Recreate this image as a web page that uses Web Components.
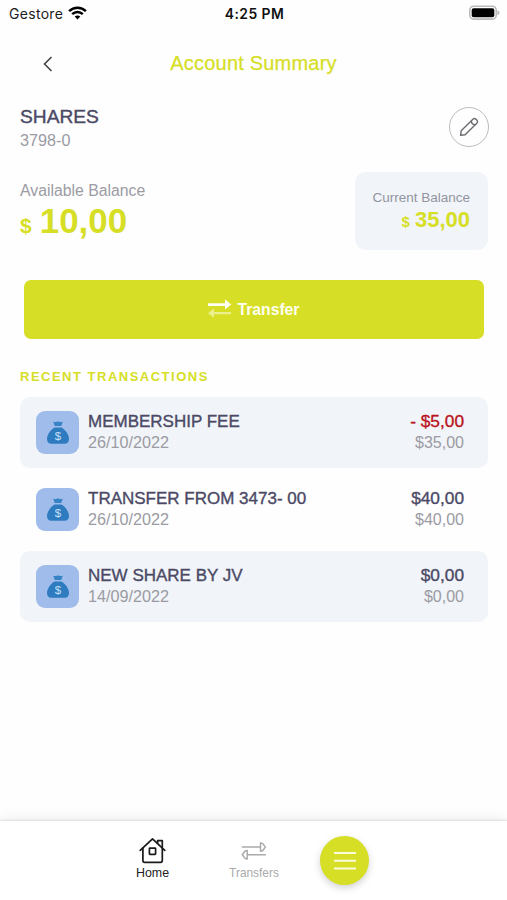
<!DOCTYPE html>
<html lang="en">
<head>
<meta charset="utf-8">
<title>Account Summary</title>
<style>
    :root {
        --lime: #d6de26;
        --ink: #4b4965;
        --muted: #9b9ba3;
        --panel: #f1f4f8;
    }
    body {
        margin: 0;
        background: #fefefe;
        font-family: "Liberation Sans", Arial, sans-serif;
        color: var(--ink);
    }
</style>
</head>
<body>
<account-app>
    <status-bar slot="top" carrier="Gestore" time="4:25 PM"></status-bar>
    <page-header slot="top">Account Summary</page-header>
    <account-info>
        <span slot="name">SHARES</span>
        <span slot="number">3798-0</span>
    </account-info>
    <balance-summary>
        <span slot="available">10,00</span>
        <span slot="current">35,00</span>
    </balance-summary>
    <transfer-button>Transfer</transfer-button>
    <transaction-list>
        <span slot="heading">RECENT TRANSACTIONS</span>
        <transaction-row shaded negative>
            <span slot="title">MEMBERSHIP FEE</span>
            <span slot="date">26/10/2022</span>
            <span slot="amount">- $5,00</span>
            <span slot="balance">$35,00</span>
        </transaction-row>
        <transaction-row>
            <span slot="title">TRANSFER FROM 3473- 00</span>
            <span slot="date">26/10/2022</span>
            <span slot="amount">$40,00</span>
            <span slot="balance">$40,00</span>
        </transaction-row>
        <transaction-row shaded>
            <span slot="title">NEW SHARE BY JV</span>
            <span slot="date">14/09/2022</span>
            <span slot="amount">$0,00</span>
            <span slot="balance">$0,00</span>
        </transaction-row>
    </transaction-list>
    <bottom-nav slot="bottom"></bottom-nav>
</account-app>

<script>
function attach(el, html) {
    const shadow = el.attachShadow({ mode: 'open' });
    const template = document.createElement('template');
    template.innerHTML = html;
    shadow.appendChild(template.content.cloneNode(true));
    return shadow;
}

class AccountApp extends HTMLElement {
    constructor() {
        super();
        attach(this, `
            <style>
                :host {
                    display: flex;
                    flex-direction: column;
                    height: 900px;
                    overflow: hidden;
                }
                main {
                    flex: 1;
                    padding: 5px 19px 0 20px;
                }
            </style>
            <slot name="top"></slot>
            <main><slot></slot></main>
            <slot name="bottom"></slot>
        `);
    }
}

class StatusBar extends HTMLElement {
    constructor() {
        super();
        const shadow = attach(this, `
            <style>
                :host {
                    display: grid;
                    grid-template-columns: 1fr auto 1fr;
                    align-items: center;
                    height: 28px;
                    box-sizing: border-box;
                    padding: 0 7px 0 9px;
                    font: 14px/28px Inter, sans-serif;
                    color: #1c1c1c;
                }
                .left { display: flex; align-items: center; gap: 5px; }
                .carrier { letter-spacing: 0.3px; }
                .time { font-weight: 600; font-size: 13.9px; letter-spacing: 0.45px; color: #111; }
                .battery { justify-self: end; }
                svg { display: block; margin-top: -2px; }
            </style>
            <div class="left">
                <span class="carrier"></span>
                <svg width="19" height="14" viewBox="0 0 19 14" fill="none" stroke="#000" stroke-width="2.5">
                    <path d="M1.1 5.1C5.8.5 13.2.5 17.9 5.1"/>
                    <path d="M4.2 8.2C7.2 5.3 11.8 5.3 14.8 8.2"/>
                    <path d="M6.7 10.6C8.3 9.2 10.7 9.2 12.3 10.6L9.5 13.5Z" fill="#000" stroke="none"/>
                </svg>
            </div>
            <span class="time"></span>
            <svg class="battery" width="31" height="16" viewBox="0 0 31 16">
                <rect x=".8" y="1.3" width="26.4" height="12.8" rx="3.8" fill="#fff" stroke="#bbb" stroke-width="1.6"/>
                <rect x="2.7" y="3.2" width="22.6" height="9" rx="2" fill="#000"/>
                <path d="M28.4 5.2Q30.6 6 30.6 7.7T28.4 10.2Z" fill="#bbb"/>
            </svg>
        `);
        shadow.querySelector('.carrier').textContent = this.getAttribute('carrier');
        shadow.querySelector('.time').textContent = this.getAttribute('time');
    }
}

class PageHeader extends HTMLElement {
    constructor() {
        super();
        attach(this, `
            <style>
                :host {
                    display: grid;
                    grid-template-columns: 54px 1fr 54px;
                    align-items: center;
                    height: 70px;
                }
                svg { justify-self: end; margin-top: 2px; }
                h1 {
                    margin: 0;
                    text-align: center;
                    font-size: 20px;
                    font-weight: 400;
                    letter-spacing: 0.2px;
                    color: var(--lime);
                    -webkit-text-stroke: 0.25px var(--lime);
                }
            </style>
            <svg width="13" height="18" viewBox="0 0 13 18" fill="none" stroke="#444" stroke-width="1.6">
                <path d="M10.5 2L3.5 9L10.5 16"/>
            </svg>
            <h1><slot></slot></h1>
        `);
    }
}

class AccountInfo extends HTMLElement {
    constructor() {
        super();
        attach(this, `
            <style>
                :host {
                    display: flex;
                    justify-content: space-between;
                    align-items: center;
                    height: 48px;
                }
                .name {
                    font-size: 19.2px;
                    line-height: 26px;
                    -webkit-text-stroke: 0.4px var(--ink);
                }
                .number { font-size: 16.2px; line-height: 21px; color: var(--muted); }
                .edit {
                    display: grid;
                    place-items: center;
                    width: 40px;
                    height: 40px;
                    margin-right: -1px;
                    box-sizing: border-box;
                    border: 1.5px solid #bcbcbe;
                    border-radius: 50%;
                    background: none;
                    padding: 0;
                }
            </style>
            <div>
                <div class="name"><slot name="name"></slot></div>
                <div class="number"><slot name="number"></slot></div>
            </div>
            <button class="edit" aria-label="Edit">
                <svg width="20" height="20" viewBox="0 0 20 20" fill="none" stroke="#6b6b70" stroke-width="1.4" stroke-linejoin="round">
                    <path d="M1.6 18.3L2.2 13.8L13.9 2.2Q15.4 .9 17 2.3L17.8 3.1Q19.2 4.7 17.8 6.2L6.1 17.7Z"/>
                    <path d="M12.4 3.8C12.4 6.4 13.7 7.7 16.2 7.7"/>
                </svg>
            </button>
        `);
    }
}

class BalanceSummary extends HTMLElement {
    constructor() {
        super();
        attach(this, `
            <style>
                :host {
                    display: flex;
                    justify-content: space-between;
                    align-items: flex-start;
                    margin-top: 21px;
                    height: 78px;
                }
                .label { color: var(--muted); }
                .value { font-weight: 700; color: var(--lime); white-space: nowrap; }
                .available { padding-top: 9px; }
                .available .label { font-size: 15.8px; line-height: 20px; }
                .available .value {
                    display: flex;
                    align-items: baseline;
                    gap: 8px;
                    font-size: 35px;
                    line-height: 40px;
                }
                .available small { font-size: 21px; }
                .current {
                    width: 133px;
                    height: 78px;
                    box-sizing: border-box;
                    padding: 16px 18px 0 0;
                    border-radius: 11px;
                    background: var(--panel);
                    text-align: right;
                }
                .current .label { font-size: 13.5px; line-height: 20px; color: #9294a2; }
                .current .value {
                    display: flex;
                    justify-content: flex-end;
                    align-items: baseline;
                    gap: 5px;
                    font-size: 22px;
                    line-height: 24px;
                }
                .current small { font-size: 15px; }
            </style>
            <div class="available">
                <div class="label">Available Balance</div>
                <div class="value"><small>$</small><slot name="available"></slot></div>
            </div>
            <div class="current">
                <div class="label">Current Balance</div>
                <div class="value"><small>$</small><slot name="current"></slot></div>
            </div>
        `);
    }
}

class TransferButton extends HTMLElement {
    constructor() {
        super();
        attach(this, `
            <style>
                :host { display: block; margin: 30px 4px 0; }
                button {
                    display: flex;
                    align-items: center;
                    justify-content: center;
                    gap: 6px;
                    width: 100%;
                    height: 59px;
                    padding: 0 2px 0 0;
                    border: 0;
                    border-radius: 7px;
                    background: var(--lime);
                    color: #fffff0;
                    font: 700 15.7px/20px "Liberation Sans", Arial, sans-serif;
                }
                svg { margin-top: -2px; }
            </style>
            <button>
                <svg width="25" height="20" viewBox="0 0 25 20">
                    <path d="M1 4.2H18V.2L24.2 5.6L18 10.6V7H1Z" fill="#fffff6"/>
                    <path d="M24 13H7V9.6L1 14.2L7 18.8V15.3H24Z" fill="#ecf08c"/>
                </svg>
                <slot></slot>
            </button>
        `);
    }
}

class TransactionList extends HTMLElement {
    constructor() {
        super();
        attach(this, `
            <style>
                :host { display: flex; flex-direction: column; gap: 6px; margin-top: 28px; }
                h2 {
                    margin: 0 0 5px;
                    font-size: 13px;
                    line-height: 19px;
                    letter-spacing: 1.5px;
                    color: var(--lime);
                }
            </style>
            <h2><slot name="heading"></slot></h2>
            <slot></slot>
        `);
    }
}

class TransactionRow extends HTMLElement {
    constructor() {
        super();
        attach(this, `
            <style>
                :host {
                    display: flex;
                    align-items: center;
                    height: 71px;
                    box-sizing: border-box;
                    padding: 0 24px 0 16px;
                    border-radius: 10px;
                }
                :host([shaded]) { background: var(--panel); }
                .icon {
                    display: grid;
                    place-items: center;
                    width: 43px;
                    height: 43px;
                    margin-right: 9px;
                    border-radius: 9px;
                    background: #a0bceb;
                }
                .icon text { font: 11.5px "Liberation Sans", Arial, sans-serif; fill: #c4e0f8; }
                .text { flex: 1; }
                .end { text-align: right; }
                .main {
                    font-size: 17px;
                    line-height: 21px;
                    -webkit-text-stroke: 0.35px;
                }
                .sub { font-size: 16.2px; line-height: 21px; color: var(--muted); }
                .end .main { font-size: 17.3px; }
                .end .sub { font-size: 16px; }
                .text, .end { padding-bottom: 2px; }
                :host([negative]) .end .main { color: #ba141c; }
            </style>
            <div class="icon">
                <svg width="24" height="24" viewBox="0 0 24 24">
                    <path d="M7.2 .7Q9 1.3 10.5 .8Q12 .2 13.5 .8Q15 1.3 16.8 .7L15.2 5.1H8.8Z" fill="#3683c6"/>
                    <path d="M8.6 6.6H15.4C19.6 8.8 23 14.2 23 18C23 21 21.3 22.7 18.6 22.7H5.4C2.7 22.7 1 21 1 18C1 14.2 4.4 8.8 8.6 6.6Z" fill="#2f7bc0"/>
                    <text x="12" y="18.6" text-anchor="middle">$</text>
                </svg>
            </div>
            <div class="text">
                <div class="main"><slot name="title"></slot></div>
                <div class="sub"><slot name="date"></slot></div>
            </div>
            <div class="end">
                <div class="main"><slot name="amount"></slot></div>
                <div class="sub"><slot name="balance"></slot></div>
            </div>
        `);
    }
}

class BottomNav extends HTMLElement {
    constructor() {
        super();
        attach(this, `
            <style>
                :host {
                    display: grid;
                    grid-template-columns: 101px 102px 101px;
                    justify-content: start;
                    align-items: start;
                    height: 79px;
                    box-sizing: border-box;
                    padding: 14px 0 0 102px;
                    background: #fff;
                    box-shadow: 0 -1px 2px rgba(0,0,0,0.1), 0 -3px 12px rgba(0,0,0,0.06);
                }
                .item {
                    display: flex;
                    flex-direction: column;
                    align-items: center;
                    padding-top: 2px;
                    font-size: 12.4px;
                    line-height: 16px;
                    color: #222;
                }
                .item.idle { color: #aaa; font-size: 11.9px; }
                .menu {
                    display: grid;
                    place-items: center;
                    margin-left: 15px;
                    width: 49px;
                    height: 49px;
                    margin-top: 1px;
                    padding: 0;
                    border: 0;
                    border-radius: 50%;
                    background: var(--lime);
                    box-shadow: 0 3px 7px rgba(80,80,80,0.25);
                }
            </style>
            <div class="item">
                <svg width="28" height="28" viewBox="0 0 28 28" fill="none" stroke="#1a1a1a" stroke-width="1.7" stroke-linejoin="round" stroke-linecap="round">
                    <path d="M1.2 13.3L13.5 1.9L25.8 13.3"/>
                    <path d="M3.9 11V23.4Q3.9 25.3 5.7 25.3H21.5Q23.3 25.3 23.3 23.4V11"/>
                    <path d="M18.6 6.2V3.7H23.3V10.3"/>
                    <rect x="10.4" y="11.2" width="6.2" height="6.2" rx=".6"/>
                </svg>
                <span>Home</span>
            </div>
            <div class="item idle">
                <svg width="28" height="28" viewBox="0 0 28 28" fill="none" stroke="#aaa" stroke-width="1.5" stroke-linejoin="round">
                    <path d="M1.8 10.1H20.5M20.5 5.9V14.3L22.6 13.8L25.4 10.1L22.6 6.4Z"/>
                    <path d="M25.9 17.7H7.2M7.2 13.5V21.9L5.1 21.4L2.3 17.7L5.1 14Z"/>
                </svg>
                <span>Transfers</span>
            </div>
            <button class="menu" aria-label="Menu">
                <svg width="22" height="20" viewBox="0 0 22 20" stroke="#fbfcdc" stroke-width="2">
                    <path d="M0 2H22M0 9.7H22M0 17.4H22"/>
                </svg>
            </button>
        `);
    }
}

customElements.define('account-app', AccountApp);
customElements.define('status-bar', StatusBar);
customElements.define('page-header', PageHeader);
customElements.define('account-info', AccountInfo);
customElements.define('balance-summary', BalanceSummary);
customElements.define('transfer-button', TransferButton);
customElements.define('transaction-list', TransactionList);
customElements.define('transaction-row', TransactionRow);
customElements.define('bottom-nav', BottomNav);
</script>
</body>
</html>
